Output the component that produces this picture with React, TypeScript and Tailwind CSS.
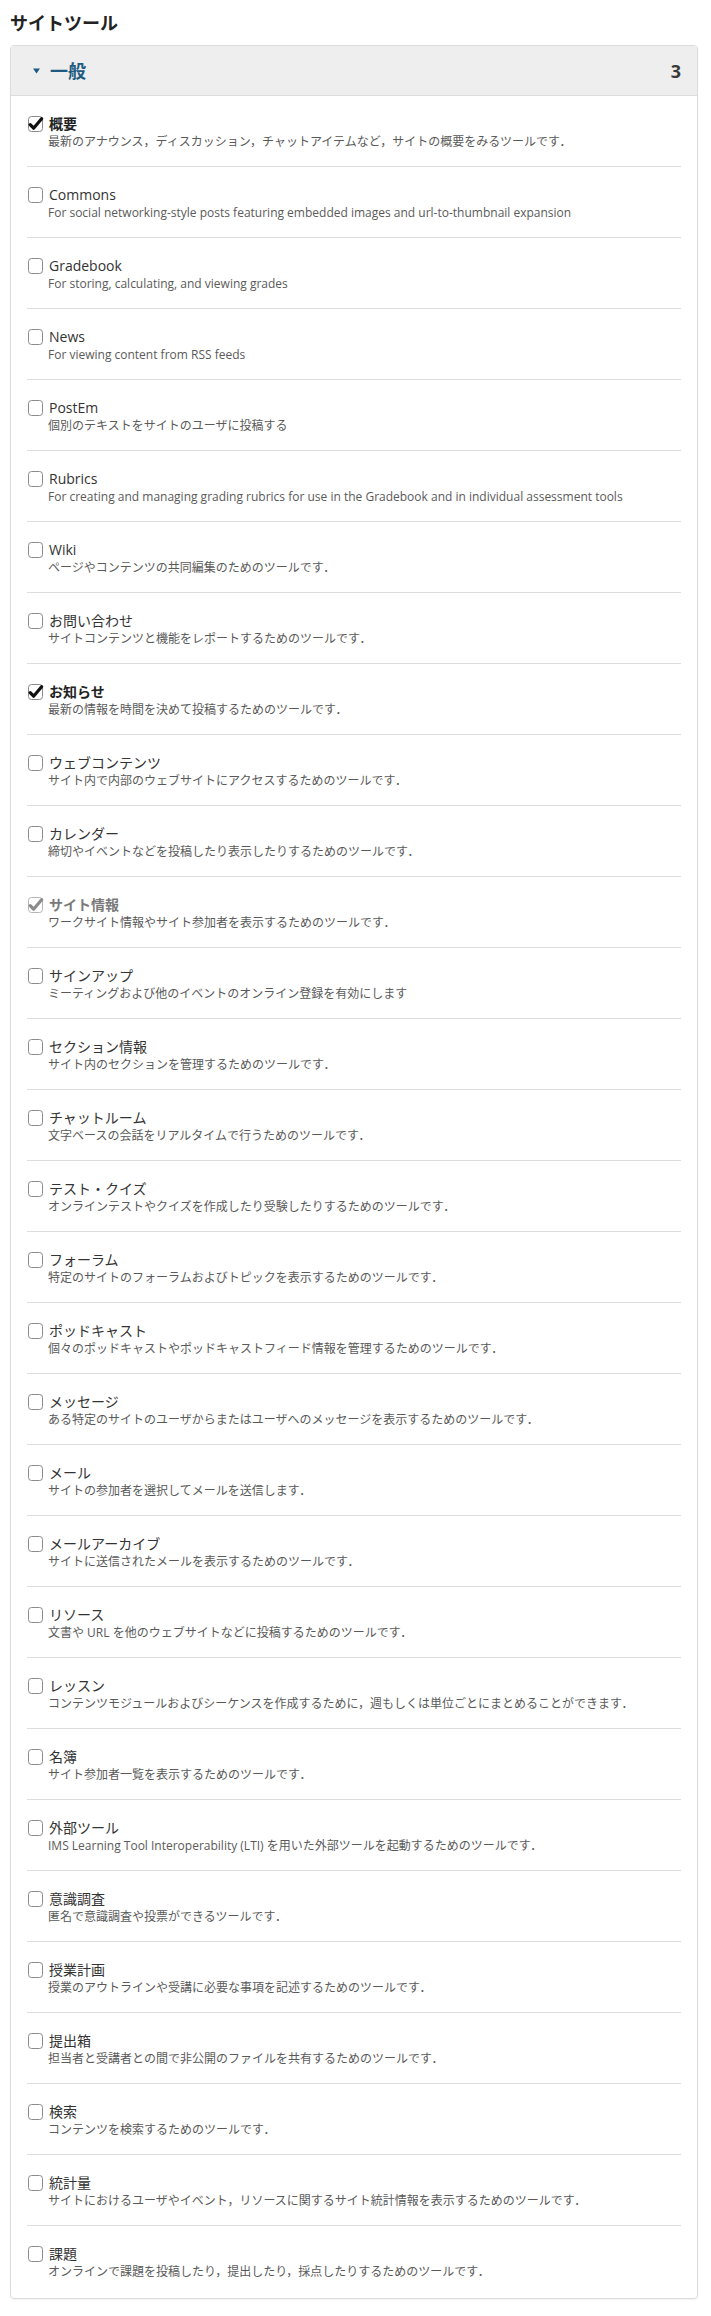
type Tool = { name: string; desc: string; state?: "on" | "locked" };

const tools: Tool[] = [
  { name: "概要", desc: "最新のアナウンス，ディスカッション，チャットアイテムなど，サイトの概要をみるツールです．", state: "on" },
  { name: "Commons", desc: "For social networking-style posts featuring embedded images and url-to-thumbnail expansion" },
  { name: "Gradebook", desc: "For storing, calculating, and viewing grades" },
  { name: "News", desc: "For viewing content from RSS feeds" },
  { name: "PostEm", desc: "個別のテキストをサイトのユーザに投稿する" },
  { name: "Rubrics", desc: "For creating and managing grading rubrics for use in the Gradebook and in individual assessment tools" },
  { name: "Wiki", desc: "ページやコンテンツの共同編集のためのツールです．" },
  { name: "お問い合わせ", desc: "サイトコンテンツと機能をレポートするためのツールです．" },
  { name: "お知らせ", desc: "最新の情報を時間を決めて投稿するためのツールです．", state: "on" },
  { name: "ウェブコンテンツ", desc: "サイト内で内部のウェブサイトにアクセスするためのツールです．" },
  { name: "カレンダー", desc: "締切やイベントなどを投稿したり表示したりするためのツールです．" },
  { name: "サイト情報", desc: "ワークサイト情報やサイト参加者を表示するためのツールです．", state: "locked" },
  { name: "サインアップ", desc: "ミーティングおよび他のイベントのオンライン登録を有効にします" },
  { name: "セクション情報", desc: "サイト内のセクションを管理するためのツールです．" },
  { name: "チャットルーム", desc: "文字ベースの会話をリアルタイムで行うためのツールです．" },
  { name: "テスト・クイズ", desc: "オンラインテストやクイズを作成したり受験したりするためのツールです．" },
  { name: "フォーラム", desc: "特定のサイトのフォーラムおよびトピックを表示するためのツールです．" },
  { name: "ポッドキャスト", desc: "個々のポッドキャストやポッドキャストフィード情報を管理するためのツールです．" },
  { name: "メッセージ", desc: "ある特定のサイトのユーザからまたはユーザへのメッセージを表示するためのツールです．" },
  { name: "メール", desc: "サイトの参加者を選択してメールを送信します．" },
  { name: "メールアーカイブ", desc: "サイトに送信されたメールを表示するためのツールです．" },
  { name: "リソース", desc: "文書や URL を他のウェブサイトなどに投稿するためのツールです．" },
  { name: "レッスン", desc: "コンテンツモジュールおよびシーケンスを作成するために，週もしくは単位ごとにまとめることができます．" },
  { name: "名簿", desc: "サイト参加者一覧を表示するためのツールです．" },
  { name: "外部ツール", desc: "IMS Learning Tool Interoperability (LTI) を用いた外部ツールを起動するためのツールです．" },
  { name: "意識調査", desc: "匿名で意識調査や投票ができるツールです．" },
  { name: "授業計画", desc: "授業のアウトラインや受講に必要な事項を記述するためのツールです．" },
  { name: "提出箱", desc: "担当者と受講者との間で非公開のファイルを共有するためのツールです．" },
  { name: "検索", desc: "コンテンツを検索するためのツールです．" },
  { name: "統計量", desc: "サイトにおけるユーザやイベント，リソースに関するサイト統計情報を表示するためのツールです．" },
  { name: "課題", desc: "オンラインで課題を投稿したり，提出したり，採点したりするためのツールです．" },
];

function Box({ state }: { state?: "on" | "locked" }) {
  const locked = state === "locked";
  return (
    <svg width="17" height="16" viewBox="0 0 17 16" className="shrink-0">
      <rect x="0.5" y="0.5" width="14" height="15" rx="3" fill="#fff" stroke={locked ? "#b5b5b5" : "#8a8a8a"} />
      {state && (
        <path
          d="M2.2 8.6 L5.6 12.2 L13.6 2.8"
          fill="none"
          stroke={locked ? "#8c8c8c" : "#111"}
          strokeWidth="3.2"
          strokeLinecap="round"
          strokeLinejoin="round"
        />
      )}
    </svg>
  );
}

export default function App() {
  return (
    <div
      className="min-h-[2316px] bg-white pt-[10px] pb-[16px] text-[#333]"
      style={{ fontFamily: '"Open Sans", "Noto Sans CJK JP", sans-serif' }}
    >
      <h1 className="mb-[9px] ml-[10px] text-[18px] font-bold leading-[26px] text-[#222]">サイトツール</h1>

      <div className="ml-[10px] mr-[13px] overflow-hidden rounded-[4px] border border-[#dcdcdc] shadow-[0_1px_2px_rgba(0,0,0,0.05)]">
        <div className="flex h-[50px] items-center border-b border-[#dcdcdc] bg-[#eeeeee] pl-[22px] pr-[16px]">
          <svg width="7" height="6" viewBox="0 0 7 6" className="mr-[10px]">
            <path d="M0 0.5 L7 0.5 L3.5 5.5 Z" fill="#1f5b80" />
          </svg>
          <span className="text-[18px] font-bold leading-[26px] text-[#1f5b80]">一般</span>
          <span className="ml-auto text-[18px] font-bold leading-[26px] text-[#3a3a3a]">3</span>
        </div>

        <ul className="px-[16px] pb-[2px]">
          {tools.map((t, i) => (
            <li
              key={t.name}
              className={`pt-[18px] pb-[16px] ${i < tools.length - 1 ? "border-b border-[#dddddd]" : ""}`}
            >
              <div className="flex items-center gap-[4px] pl-[1px]">
                <Box state={t.state} />
                <span
                  className={`text-[14px] leading-[20px] ${
                    t.state === "on"
                      ? "font-bold text-[#222]"
                      : t.state === "locked"
                        ? "font-bold text-[#7a7a7a]"
                        : "text-[#333]"
                  }`}
                >
                  {t.name}
                </span>
              </div>
              <p className="pl-[21px] text-[12px] leading-[16px] text-[#5a5a5a]">{t.desc}</p>
            </li>
          ))}
        </ul>
      </div>
    </div>
  );
}
